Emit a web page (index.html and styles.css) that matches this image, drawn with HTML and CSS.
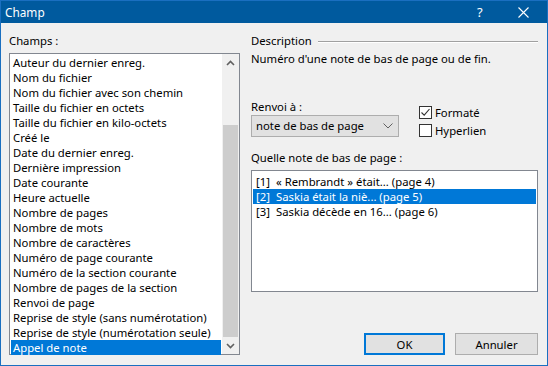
FILE: index.html
```html
<!DOCTYPE html>
<html lang="fr">
<head>
    <meta charset="UTF-8">
    <title>Champ</title>
    <link rel="stylesheet" href="styles.css">
</head>
<body>
    <div class="window">
        <header class="titlebar">
            <span class="title">Champ</span>
            <span class="help">?</span>
            <span class="close">
                <svg width="11" height="11" viewBox="0 0 11 11"><path d="M0.5 0.5 L10.5 10.5 M10.5 0.5 L0.5 10.5" stroke="#fff" stroke-width="1.1"/></svg>
            </span>
        </header>
        <div class="content">
            <section class="left">
                <div class="label">Champs :</div>
                <div class="listbox fields">
                    <ul>
                        <li>Auteur du dernier enreg.</li>
                        <li>Nom du fichier</li>
                        <li>Nom du fichier avec son chemin</li>
                        <li>Taille du fichier en octets</li>
                        <li>Taille du fichier en kilo-octets</li>
                        <li>Créé le</li>
                        <li>Date du dernier enreg.</li>
                        <li>Dernière impression</li>
                        <li>Date courante</li>
                        <li>Heure actuelle</li>
                        <li>Nombre de pages</li>
                        <li>Nombre de mots</li>
                        <li>Nombre de caractères</li>
                        <li>Numéro de page courante</li>
                        <li>Numéro de la section courante</li>
                        <li>Nombre de pages de la section</li>
                        <li>Renvoi de page</li>
                        <li>Reprise de style (sans numérotation)</li>
                        <li>Reprise de style (numérotation seule)</li>
                        <li class="selected">Appel de note</li>
                    </ul>
                    <div class="scrollbar">
                        <div class="arrow">
                            <svg width="9" height="6" viewBox="0 0 9 6"><path d="M1 5 L4.5 1.5 L8 5" fill="none" stroke="#606060" stroke-width="1.6"/></svg>
                        </div>
                        <div class="track"><div class="thumb"></div></div>
                        <div class="arrow">
                            <svg width="9" height="6" viewBox="0 0 9 6"><path d="M1 1 L4.5 4.5 L8 1" fill="none" stroke="#606060" stroke-width="1.6"/></svg>
                        </div>
                    </div>
                </div>
            </section>
            <section class="right">
                <div class="group-title">
                    <span>Description</span>
                    <span class="rule"></span>
                </div>
                <div class="desc">Numéro d'une note de bas de page ou de fin.</div>

                <div class="options">
                    <div class="renvoi">
                        <div class="label">Renvoi à :</div>
                        <div class="select">
                            <span>note de bas de page</span>
                            <svg width="10" height="6" viewBox="0 0 10 6"><path d="M0.5 0.5 L5 5 L9.5 0.5" fill="none" stroke="#606060" stroke-width="1"/></svg>
                        </div>
                    </div>
                    <div class="checks">
                        <label class="check">
                            <span class="box">
                                <svg width="11" height="11" viewBox="0 0 11 11"><path d="M1.5 5.5 L4.2 8.2 L9.5 2" fill="none" stroke="#333" stroke-width="1.1"/></svg>
                            </span>
                            Formaté
                        </label>
                        <label class="check">
                            <span class="box"></span>
                            Hyperlien
                        </label>
                    </div>
                </div>

                <div class="label notes-label">Quelle note de bas de page :</div>
                <div class="listbox notes">
                    <ul>
                        <li><span class="num">[1]</span>« Rembrandt » était... (page 4)</li>
                        <li class="selected"><span class="num">[2]</span>Saskia était la niè... (page 5)</li>
                        <li><span class="num">[3]</span>Saskia décède en 16... (page 6)</li>
                    </ul>
                </div>

                <div class="buttons">
                    <button type="button" class="default">OK</button>
                    <button type="button">Annuler</button>
                </div>
            </section>
        </div>
    </div>
</body>
</html>
```
FILE: styles.css
```css
body {
    margin: 0;
    font-family: "Noto Sans", "Open Sans", sans-serif;
    font-size: 11.3px;
    line-height: 16px;
    color: #000;
}
.window {
    width: 548px;
    height: 366px;
    box-sizing: border-box;
    border: 1px solid #1a6fc0;
    background-color: #f0f0f0;
    display: flex;
    flex-direction: column;
}
.titlebar {
    height: 23px;
    background-color: #005a9e;
    color: white;
    display: flex;
    align-items: center;
    padding-left: 4px;
    font-size: 11.8px;
}
.title {
    flex: 1;
}
.help {
    width: 14px;
    margin-right: 27px;
    font-size: 13px;
}
.close {
    width: 11px;
    height: 11px;
    margin-right: 18px;
    display: flex;
}
.content {
    flex: 1;
    display: flex;
    padding: 10px 9px 10px 8px;
    gap: 11px;
}
.left {
    width: 231px;
    display: flex;
    flex-direction: column;
}
.label {
    height: 16px;
}
.left .label {
    margin-bottom: 4px;
}
.listbox {
    background-color: white;
    border: 1px solid #828790;
    box-sizing: border-box;
    display: flex;
}
.listbox ul {
    list-style: none;
    margin: 0;
    padding: 1px 1px;
    flex: 1;
}
.listbox li {
    height: 15px;
    line-height: 15px;
    padding-left: 2px;
    white-space: nowrap;
    overflow: hidden;
}
.listbox li.selected {
    background-color: #0078d7;
    color: white;
}
.fields {
    height: 302px;
}
.scrollbar {
    width: 17px;
    background-color: #f0f0f0;
    display: flex;
    flex-direction: column;
}
.scrollbar .arrow {
    height: 17px;
    display: flex;
    align-items: center;
    justify-content: center;
}
.scrollbar .track {
    flex: 1;
    display: flex;
    flex-direction: column;
    justify-content: flex-end;
}
.scrollbar .thumb {
    height: 212px;
    margin: 0 1px;
    background-color: #cdcdcd;
}
.right {
    flex: 1;
    display: flex;
    flex-direction: column;
}
.group-title {
    display: flex;
    align-items: center;
    gap: 6px;
}
.group-title .rule {
    flex: 1;
    border-top: 1px solid #a0a0a0;
    border-bottom: 1px solid white;
    margin-top: 1px;
}
.desc {
    margin-top: 2px;
}
.options {
    display: flex;
    align-items: flex-end;
    margin-top: 32px;
}
.renvoi {
    width: 148px;
}
.select {
    height: 22px;
    box-sizing: border-box;
    border: 1px solid #adadad;
    background-color: #e1e1e1;
    display: flex;
    align-items: center;
    justify-content: space-between;
    padding: 0 5px 0 4px;
}
.checks {
    margin-left: 20px;
    display: flex;
    flex-direction: column;
    gap: 5px;
}
.check {
    display: flex;
    align-items: center;
    gap: 3px;
    height: 13px;
}
.box {
    width: 13px;
    height: 13px;
    box-sizing: border-box;
    border: 1px solid #333;
    background-color: white;
    display: flex;
    align-items: center;
    justify-content: center;
}
.notes-label {
    margin-top: 13px;
    margin-bottom: 4px;
}
.notes {
    height: 122px;
}
.notes ul {
    padding: 3px 1px;
}
.notes li {
    padding-left: 3px;
}
.num {
    display: inline-block;
    width: 20px;
}
.buttons {
    margin-top: auto;
    display: flex;
    justify-content: flex-end;
    gap: 10px;
}
.buttons button {
    width: 83px;
    height: 22px;
    box-sizing: border-box;
    background-color: #e1e1e1;
    border: 1px solid #adadad;
    font-family: inherit;
    font-size: 11.3px;
    color: #000;
    padding: 0;
}
.buttons button.default {
    width: 81px;
    border: 2px solid #0078d7;
}
```
